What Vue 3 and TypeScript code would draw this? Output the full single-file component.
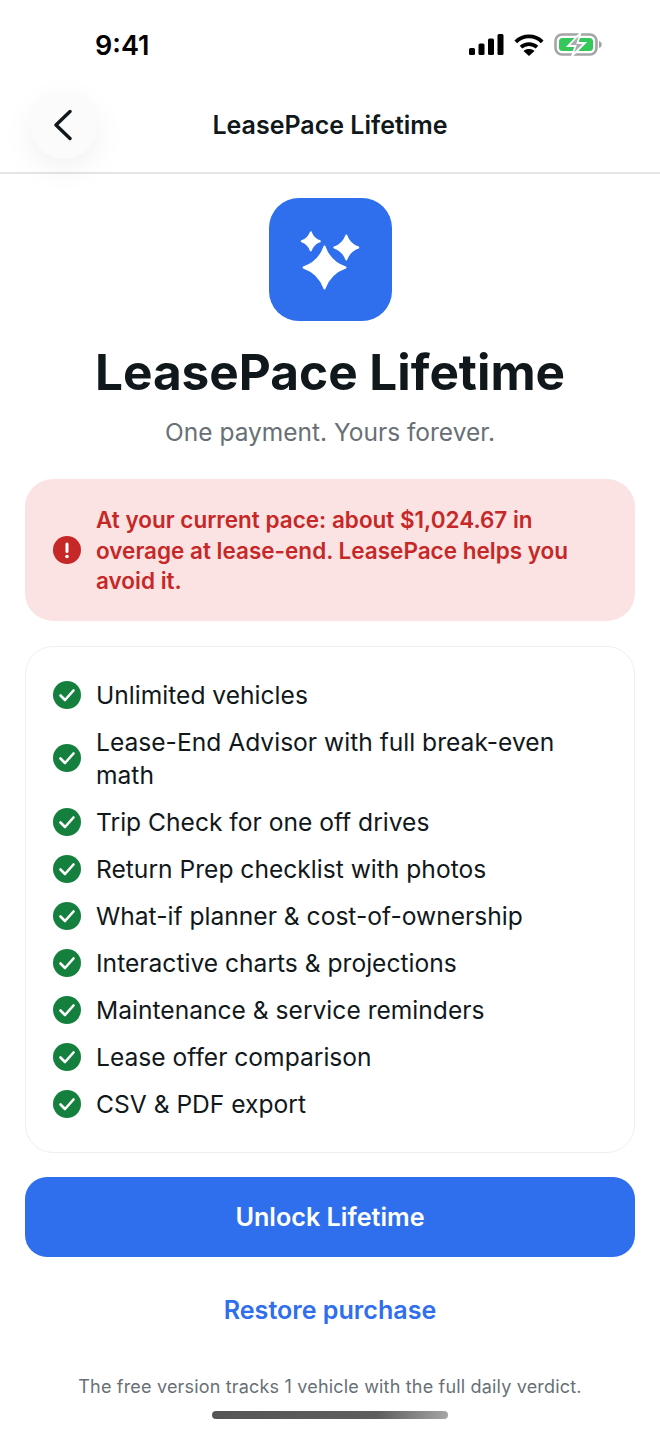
<template>
  <div class="screen">
    <div class="status-bar">
      <span class="clock">9:41</span>
      <div class="status-icons">
        <svg width="35" height="21" viewBox="0 0 35 21">
          <rect x="0" y="14" width="6" height="7" rx="1.5" />
          <rect x="9.5" y="9.5" width="6" height="11.5" rx="1.5" />
          <rect x="19" y="4.5" width="6" height="16.500" rx="1.500" />
          <rect x="28.5" y="0" width="6" height="21" rx="1.5" />
        </svg>
        <svg width="30" height="22" viewBox="0 0 30 22" fill="none" stroke="#000" stroke-width="3.8">
          <path d="M1.800 7.800C9.200 .6 20.800 .6 28.200 7.800" />
          <path d="M7 13.200C11.500 9 18.500 9 23 13.200" />
          <path d="M15 22l-5.500-5c3-2.600 8-2.600 11 0z" fill="#000" stroke="none" />
        </svg>
        <svg width="48" height="23" viewBox="0 0 48 23">
          <rect x="1.500" y="1.500" width="41" height="20" rx="6.500" fill="none" stroke="#a3a5a6" stroke-width="2.600" />
          <rect x="5" y="5" width="34" height="13" rx="3.500" fill="#34c759" />
          <path d="M45 8c1.800.5 2.800 2 2.800 3.500S46.800 14.500 45 15z" fill="#a3a5a6" />
          <path d="M26.500 0 14 13h7.500L18 23l13-13h-7.500z" fill="#a9abad" stroke="#fff" stroke-width="1.800" />
        </svg>
      </div>
    </div>

    <header class="nav">
      <button class="back" aria-label="Back">
        <svg width="20" height="32" viewBox="0 0 20 32" fill="none" stroke="#11181c" stroke-width="3.400" stroke-linecap="round" stroke-linejoin="round">
          <path d="M16 2.500 2 16l14 13.500" />
        </svg>
      </button>
      <h2 class="nav-title">LeasePace Lifetime</h2>
    </header>

    <main class="content">
      <div class="app-icon">
        <svg width="60" height="60" viewBox="0 0 60 60" fill="#fff" stroke="#fff" stroke-width="2" stroke-linejoin="round">
          <path v-for="star in stars" :key="star.cx" :d="starPath(star)" />
        </svg>
      </div>
      <h1 class="title">LeasePace Lifetime</h1>
      <p class="subtitle">One payment. Yours forever.</p>

      <div class="alert">
        <svg class="row-icon" width="28" height="28" viewBox="0 0 28 28">
          <circle cx="14" cy="14" r="14" fill="#c62828" />
          <rect x="12.500" y="6.500" width="3" height="10.500" rx="1.500" fill="#fff" />
          <circle cx="14" cy="20.500" r="1.800" fill="#fff" />
        </svg>
        <p class="alert-text">At your current pace: about $1,024.67 in overage at lease-end. LeasePace helps you avoid it.</p>
      </div>

      <ul class="features">
        <li v-for="feature in features" :key="feature" class="feature">
          <svg class="row-icon" width="28" height="28" viewBox="0 0 28 28">
            <circle cx="14" cy="14" r="14" fill="#15803d" />
            <path d="M7.500 14.500l4.500 4.500 8.500-9.500" fill="none" stroke="#fff" stroke-width="2.600" stroke-linecap="round" stroke-linejoin="round" />
          </svg>
          <span class="feature-text">{{ feature }}</span>
        </li>
      </ul>

      <button class="unlock">Unlock Lifetime</button>
      <button class="restore">Restore purchase</button>
      <p class="footnote">The free version tracks 1 vehicle with the full daily verdict.</p>
    </main>

    <div class="home-indicator"></div>
  </div>
</template>

<script setup lang="ts">
interface Star {
  cx: number
  cy: number
  r: number
}

const features: string[] = [
  'Unlimited vehicles',
  'Lease-End Advisor with full break-even math',
  'Trip Check for one off drives',
  'Return Prep checklist with photos',
  'What-if planner & cost-of-ownership',
  'Interactive charts & projections',
  'Maintenance & service reminders',
  'Lease offer comparison',
  'CSV & PDF export'
]

const stars: Star[] = [
  { cx: 24.5, cy: 37.5, r: 21 },
  { cx: 10.8, cy: 11.3, r: 9 },
  { cx: 46.3, cy: 17.5, r: 12 }
]

// four point sparkle with concave sides
const starPath = ({ cx, cy, r }: Star): string => {
  const k = r * 0.26
  return `M${cx} ${cy - r}Q${cx + k} ${cy - k} ${cx + r} ${cy}Q${cx + k} ${cy + k} ${cx} ${cy + r}Q${cx - k} ${cy + k} ${cx - r} ${cy}Q${cx - k} ${cy - k} ${cx} ${cy - r}Z`
}
</script>

<style>
html,
body {
  margin: 0;
  background: #fff;
}
</style>

<style scoped>
.screen {
  width: 660px;
  height: 1431px;
  overflow: hidden;
  background: #fff;
  font-family: Inter, "Liberation Sans", sans-serif;
  color: #11181c;
  display: flex;
  flex-direction: column;
}

.status-bar {
  height: 90px;
  box-sizing: border-box;
  padding: 31px 58px 0 95px;
  display: flex;
  justify-content: space-between;
  align-items: flex-start;
}

.clock {
  font-size: 27px;
  line-height: 30px;
  font-weight: 600;
  color: #000;
}

.status-icons {
  display: flex;
  align-items: center;
  gap: 10px;
  margin-top: 2px;
}

.nav {
  position: relative;
  height: 84px;
  box-sizing: border-box;
  border-bottom: 2px solid #e4e5e7;
  display: flex;
  align-items: center;
  justify-content: center;
}

.back {
  position: absolute;
  left: 30px;
  top: 1px;
  width: 68px;
  height: 68px;
  border: none;
  border-radius: 50%;
  background: #fbfbfb;
  box-shadow: 0 10px 32px rgba(0, 0, 0, 0.06);
  padding: 0;
  display: flex;
  align-items: center;
  justify-content: center;
}

.nav-title {
  margin: 0 0 12px;
  font-size: 25px;
  line-height: 32px;
  font-weight: 600;
}

.content {
  padding: 24px 25px 0;
  display: flex;
  flex-direction: column;
  align-items: center;
}

.app-icon {
  width: 123px;
  height: 123px;
  border-radius: 30px;
  background: #2f6fed;
  display: flex;
  align-items: center;
  justify-content: center;
}

.title {
  margin: 22px 0 0;
  font-size: 49.500px;
  line-height: 58px;
  font-weight: 700;
}

.subtitle {
  margin: 15px 0 0;
  font-size: 24.500px;
  line-height: 32px;
  color: #687076;
}

.alert {
  margin-top: 31px;
  width: 100%;
  box-sizing: border-box;
  padding: 25px 28px;
  border-radius: 28px;
  background: #fbe3e3;
  display: flex;
  align-items: center;
  gap: 15px;
}

.row-icon {
  flex: none;
}

.alert-text {
  margin: 1px 0 -1px;
  font-size: 22.500px;
  line-height: 30.500px;
  font-weight: 600;
  color: #c62828;
}

.features {
  list-style: none;
  margin: 25px 0 0;
  padding: 31px 27px;
  width: 100%;
  box-sizing: border-box;
  border: 1px solid #eeeff0;
  border-radius: 28px;
  display: flex;
  flex-direction: column;
  gap: 13px;
}

.feature {
  display: flex;
  align-items: center;
  gap: 15px;
  min-height: 34px;
  font-size: 24.600px;
  line-height: 33.500px;
}

.feature-text {
  margin: 1px 0 -1px;
}

.unlock {
  margin-top: 24px;
  width: 100%;
  height: 80px;
  border: none;
  border-radius: 22px;
  background: #2f6fed;
  color: #fff;
  font: 600 25.200px Inter, "Liberation Sans", sans-serif;
}

.restore {
  margin-top: 37px;
  border: none;
  background: none;
  padding: 0;
  color: #2f6fed;
  font: 600 25.100px/32px Inter, "Liberation Sans", sans-serif;
}

.footnote {
  margin: 49px 0 0;
  font-size: 18px;
  line-height: 24px;
  color: #687076;
  letter-spacing: 0.18px;
}

.home-indicator {
  width: 236px;
  height: 8px;
  border-radius: 4px;
  margin: 12px auto 0;
  background: linear-gradient(90deg, #555 0%, #5e5e5e 70%, #a5a5a5 100%);
}
</style>
